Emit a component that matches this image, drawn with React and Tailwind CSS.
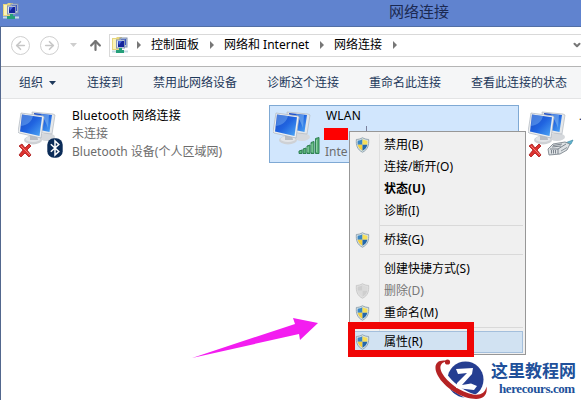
import clsx from 'clsx'
import { ArrowLeft, ArrowRight, ArrowUp, ChevronDown } from 'lucide-react'

const crumbs = [
  { label: '控制面板', className: 'w-12' },
  { label: '网络和 Internet', className: 'w-[85px]' },
  { label: '网络连接', className: 'w-12' },
]

const commands = [
  { label: '连接到', className: 'w-9 mr-[30px]' },
  { label: '禁用此网络设备', className: 'w-21 mr-[30px]' },
  { label: '诊断这个连接', className: 'w-[72px] mr-[30px]' },
  { label: '重命名此连接', className: 'w-[72px] mr-[30px]' },
  { label: '查看此连接的状态', className: 'w-24' },
]

const menu = [
  { label: '禁用(B)', shield: true },
  { label: '连接/断开(O)' },
  { label: '状态(U)', bold: true },
  { label: '诊断(I)' },
  null,
  { label: '桥接(G)', shield: true },
  null,
  { label: '创建快捷方式(S)' },
  { label: '删除(D)', shield: true, disabled: true },
  { label: '重命名(M)', shield: true },
  null,
  { label: '属性(R)', shield: true, active: true },
]

function FolderIcon() {
  return (
    <svg width="16" height="17" viewBox="0 0 16 17" className="shrink-0">
      <path d="M0 1h4l1-1h5v13H0z" fill="#e6d57c" />
      <path d="M1 2h3v10H1z" fill="#fbf3b4" />
      <rect x="8" y="1" width="7" height="9" fill="#b9cbe8" stroke="#8291ae" />
      <rect x="9" y="2" width="5" height="6" fill="#3c56c4" />
      <rect x="4.500" y="3" width="8" height="8" fill="#dbe6f5" stroke="#8797b5" />
      <rect x="6" y="4" width="6" height="6" fill="#14249b" />
      <path d="M6 4h4L7 8z" fill="#4b69dc" />
      <path d="M0 13.500h16v2H0z" fill="#c5dbe4" />
      <path d="M7 11h3v2h2v3H4v-3h3z" fill="#26a07a" />
    </svg>
  )
}

function Computers() {
  return (
    <svg width="40" height="34" viewBox="0 0 40 34">
      <defs>
        <linearGradient id="screen" x1="0" y1="0" x2="1" y2="1">
          <stop offset="0" stopColor="#1a48c4" />
          <stop offset=".5" stopColor="#2064e0" />
          <stop offset="1" stopColor="#4fa8f5" />
        </linearGradient>
      </defs>
      <ellipse cx="29" cy="26" rx="8" ry="4" fill="#d5d8dc" />
      <path d="M14 1l21 2 2 1-3 19-18-2z" fill="#e4e7ea" stroke="#b3b9c0" strokeWidth=".7" />
      <path d="M16 2l18 2-2.500 17-14-3z" fill="url(#screen)" />
      <path d="M23 3l8 1-1 13c-2-5-4-10-7-14z" fill="#8fc5f5" opacity=".5" />
      <ellipse cx="15" cy="29" rx="9" ry="4.400" fill="#ced1d5" />
      <ellipse cx="15" cy="28" rx="7.500" ry="3" fill="#e3e5e8" />
      <path d="M12 23l7 1 1 5h-8z" fill="#b9bdc3" />
      <path d="M3 2l22 3 1 1-3 21L1 22 0 21z" fill="#edeff1" stroke="#aeb5bd" strokeWidth=".7" />
      <path d="M4 3.500l20 2.800-2.500 18.700L2 20.500z" fill="url(#screen)" />
      <path d="M4 3.500l11 1.500c-1 5-5 9-12 10z" fill="#7fb6f5" opacity=".45" />
    </svg>
  )
}

function RedCross() {
  return (
    <svg width="14" height="15" viewBox="0 0 14 15">
      <path d="M1 3l3-2 3 4 4-4 2 2-4 4 4 5-2 2-4-4-4 4-2-2 4-5z" fill="#dc3230" stroke="#a91818" strokeWidth=".8" />
      <path d="M3 3l9 9" stroke="#f47a72" />
    </svg>
  )
}

function BluetoothBadge() {
  return (
    <svg width="16" height="20" viewBox="0 0 16 20">
      <rect x=".3" y=".3" width="15.400" height="19.400" rx="6.500" fill="#0b2c58" />
      <path d="M3.800 6.200l8 7.300L8 17V3l3.800 3.500-8 7.300" fill="none" stroke="#fff" strokeWidth="1.500" />
    </svg>
  )
}

function SignalBars() {
  return (
    <svg width="22" height="18" viewBox="0 0 22 18" fill="#5bb37b" stroke="#26794a" strokeWidth=".9">
      <path d="M1 14l3-1v3.500H1zM5 12l3-1v5.500H5zM9 9l3-1v8.500H9zM13 5.500l3-1v12h-3zM17.500 1.500l3.500-1v16h-3.500z" />
      <path d="M18.500 3v12M14 7v8M10 10v5" stroke="#9cdbb0" strokeWidth=".8" />
    </svg>
  )
}

function Plug() {
  return (
    <svg width="28" height="17" viewBox="0 0 28 17">
      <path d="M18 4l8-3-2 4-5 2z" fill="#62b4cf" stroke="#418ca7" strokeWidth=".7" />
      <path d="M1 10l5-5 12-2 5 2-3 6-7 4-11 1z" fill="#dde1e4" stroke="#7e878f" strokeWidth=".9" />
      <path d="M3 10h8l8-5M11 10v5M4.500 11v3.500M6.500 11v3.500M8.500 11v3.500M6 6.500l9-1.500M5 8l9-1" fill="none" stroke="#727b83" strokeWidth=".9" />
      <path d="M14 12l6-3.500" stroke="#8c959c" />
    </svg>
  )
}

function Shield({ disabled }) {
  return (
    <svg width="15" height="16" viewBox="0 0 15 17" className={clsx('-ml-px shrink-0', disabled && 'opacity-60')}>
      <path
        d="M7.500.8C5.500 2 3 2.600 1 2.600c-.5 6 .8 10.800 6.500 13.600C13.200 13.400 14.500 8.600 14 2.600 12 2.600 9.500 2 7.500.8z"
        fill={disabled ? '#d8d8d8' : '#d5e2e8'}
        stroke={disabled ? '#aaa' : '#879aa6'}
        strokeWidth=".9"
      />
      <path d="M7.500 2.500v5.800H2.400c-.2-1.300-.2-3 0-4.400 1.800-.1 3.600-.6 5.100-1.400z" fill={disabled ? '#b8b8b8' : '#3a86c4'} />
      <path d="M7.500 2.500v5.800h5.100c.2-1.300.2-3 0-4.400-1.800-.1-3.600-.6-5.100-1.400z" fill={disabled ? '#ccc' : '#f7df58'} />
      <path d="M7.500 8.300v6.300C4.600 13.100 2.900 11 2.400 8.300z" fill={disabled ? '#ccc' : '#f3cf3d'} />
      <path d="M7.500 8.300v6.300c2.900-1.500 4.600-3.600 5.100-6.300z" fill={disabled ? '#b8b8b8' : '#2367ab'} />
    </svg>
  )
}

function Triangle() {
  return (
    <svg width="4" height="8" viewBox="0 0 4 8" className="shrink-0">
      <path d="M0 0l4 4-4 4z" fill="#777" />
    </svg>
  )
}

function Connection({ name, status, device, selected, badge, disconnected }) {
  return (
    <div
      className={clsx(
        'relative flex h-[58px] w-[250px] shrink-0 border pl-[3px] pt-px',
        selected ? 'border-[#7fa9d4] bg-[#d1e6fd]' : 'border-transparent'
      )}
    >
      <div className="relative mt-[4px] h-12 w-[54px] shrink-0">
        <Computers />
        {disconnected && (
          <div className="absolute left-0 top-[32px]">
            <RedCross />
          </div>
        )}
        {badge}
      </div>
      <div className="whitespace-nowrap text-[12px] leading-[18px] text-[#6d6d6d]">
        <div className="text-black">{name}</div>
        <div className="h-[18px]">{status}</div>
        <div>{device}</div>
      </div>
    </div>
  )
}

function ContextMenu() {
  return (
    <div className="absolute left-[349px] top-[131px] w-[177px] border border-[#979797] bg-[#f0f0f0] p-0.5 pb-px text-[12px]">
      <div className="absolute bottom-0.5 left-[29px] top-0.5 w-px bg-[#dfdfdf]" />
      {menu.map((item, i) =>
        item ? (
          <div
            key={item.label}
            className={clsx(
              'relative flex h-[22px] items-center border pl-[3px]',
              item.active ? 'border-[#a4bfdc] bg-[#d1e2f2]' : 'border-transparent',
              item.disabled ? 'text-[#777]' : 'text-black',
              item.bold && 'font-bold'
            )}
          >
            <div className="w-7 shrink-0">{item.shield && <Shield disabled={item.disabled} />}</div>
            <span className="whitespace-nowrap">{item.label}</span>
          </div>
        ) : (
          <div key={i} className="ml-7 flex h-[7px] items-center">
            <div className="h-px w-full bg-[#d9d9d9]" />
          </div>
        )
      )}
    </div>
  )
}

function SiteLogo() {
  return (
    <div className="absolute left-[434px] top-[358px] flex h-[42px] w-[147px] bg-white">
      <svg width="57" height="42" viewBox="0 0 57 42" className="shrink-0 overflow-visible">
        <circle cx="31.500" cy="21.500" r="18" fill="#253e91" />
        <path d="M11 4C8 9 12 17 21 25s20 13 28 12l-1 4-17-1L9 27 3 14z" fill="#fff" />
        <path d="M13 3C3 1-1 7 3 16c5 11 20 22 34 24.500 11 2 17-2 15.500-12C51 35 47 37.500 39 36.500 27 34.500 13 24 8 15 5 9 6 5 13 3z" fill="#b52324" />
        <path d="M22 11l17-1-1 6-10 11 9-1.500 6 2.500-3 4-18-2 1-5 10-10-9 1z" fill="#fff" />
        <circle cx="13.500" cy="4" r="2.600" fill="#b52324" />
      </svg>
      <div className="whitespace-nowrap pt-[3px] font-bold text-[#20509a]">
        <div className="font-['Noto_Sans_CJK_SC',sans-serif] text-[17px] leading-[18px]">这里教程网</div>
        <div className="pl-2 pt-[3px] font-['Liberation_Serif',serif] text-[13px] leading-[14px] tracking-[-0.4px]">herecours.com</div>
      </div>
    </div>
  )
}

export default function App() {
  return (
    <div className="relative flex h-[400px] w-[581px] flex-col overflow-hidden bg-white font-['Noto_Sans','Noto_Sans_CJK_SC',sans-serif] text-[12px]">
      <header className="flex h-[27px] shrink-0 border-b border-[#526fa5] bg-[#6083cf] pl-[3px] pt-[3px]">
        <FolderIcon />
        <h1 className="ml-[370px] text-[15px] leading-[17px] text-[#1b2951]">网络连接</h1>
      </header>

      <div className="flex grow flex-col border-l border-[#52678e]">
        <nav className="flex h-10 shrink-0 items-center border-b border-[#b5b5b5] pb-[3px] pl-[10px]">
          <div className="flex size-[19px] items-center justify-center rounded-full border-[1.500px] border-[#cfcfcf] text-[#c6c6c6]">
            <ArrowLeft size={13} strokeWidth={3} />
          </div>
          <div className="ml-[10px] flex size-[19px] items-center justify-center rounded-full border-[1.500px] border-[#cfcfcf] text-[#c6c6c6]">
            <ArrowRight size={13} strokeWidth={3} />
          </div>
          <svg width="7" height="4" className="ml-[11px]">
            <path d="M0 0h7L3.500 4z" fill="#cecece" />
          </svg>
          <ArrowUp size={15} strokeWidth={3.5} className="ml-[11px] text-[#737373]" />
          <div className="ml-[6px] flex h-[23px] grow items-center border border-r-0 border-[#d9d9d9] pl-[2px] text-black">
            <FolderIcon />
            <div className="ml-[9px] flex items-center">
              <Triangle />
              {crumbs.map((crumb) => (
                <div key={crumb.label} className="ml-[10px] flex items-center">
                  <span className={clsx('whitespace-nowrap', crumb.className)}>{crumb.label}</span>
                  <span className="ml-[11px]">
                    <Triangle />
                  </span>
                </div>
              ))}
            </div>
            <ChevronDown size={10} strokeWidth={5} className="-mr-px ml-auto text-[#777]" />
          </div>
        </nav>

        <div className="flex h-8 shrink-0 items-center whitespace-nowrap border-b border-[#e3e4e5] bg-[#f5f6f7] pl-[18px] text-[#1e395b]">
          <span>组织</span>
          <svg width="7" height="4" className="ml-[6px] mr-[31px]">
            <path d="M0 0h7L3.500 4z" fill="#1e395b" />
          </svg>
          {commands.map((command) => (
            <span key={command.label} className={clsx('shrink-0', command.className)}>
              {command.label}
            </span>
          ))}
        </div>

        <main className="flex gap-[5px] pl-[13px] pt-[6px]">
          <Connection
            name={<span className="tracking-[0.15px]">Bluetooth 网络连接</span>}
            status="未连接"
            device="Bluetooth 设备(个人区域网)"
            disconnected
            badge={
              <div className="absolute left-[29px] top-[27px]">
                <BluetoothBadge />
              </div>
            }
          />
          <Connection
            selected
            name={<span className="-ml-px tracking-[0.2px]">WLAN</span>}
            status={
              <div className="flex pt-px">
                <div className="-ml-[3px] mt-[2px] h-3 w-6 bg-[#fe0000]" />
                <div className="ml-[18px] h-3 w-px bg-[#7b7f9b]" />
              </div>
            }
            device={<span className="-ml-[2px]">Inte</span>}
            badge={
              <div className="absolute left-[25px] top-[26px]">
                <SignalBars />
              </div>
            }
          />
          <Connection
            name={<span className="-ml-[3px] text-[10px]">.</span>}
            disconnected
            badge={
              <div className="absolute left-[19px] top-[28px]">
                <Plug />
              </div>
            }
          />
        </main>
      </div>

      <ContextMenu />
      <div className="absolute left-[348px] top-[322px] h-[35px] w-[126px] border-[7px] border-[#f00505]" />

      <svg width="126" height="42" viewBox="0 0 126 42" className="absolute left-[192px] top-[317px]">
        <path d="M0 41L103 7l-2-6 25 5-18 17-1-6z" fill="#f31df0" />
      </svg>

      <SiteLogo />
    </div>
  )
}
